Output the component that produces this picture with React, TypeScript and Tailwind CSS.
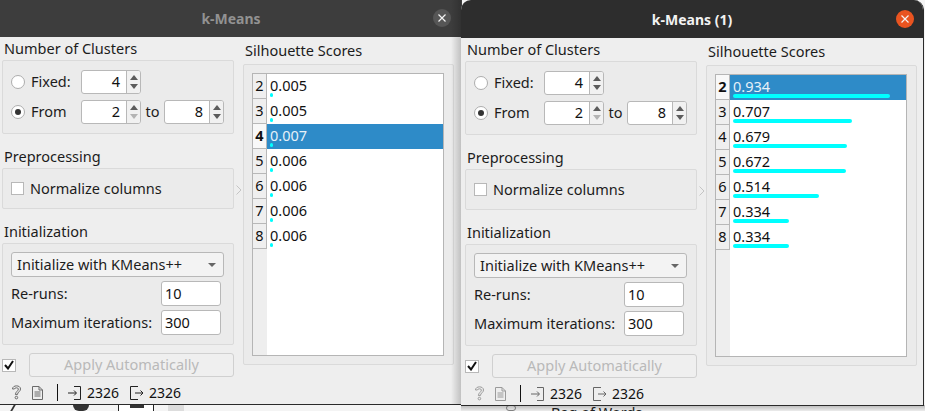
import React from "react";

const font = { fontFamily: '"Noto Sans", "Open Sans", sans-serif' };

function Arrow({ up, dim }: { up?: boolean; dim?: boolean }) {
  return (
    <svg width="8" height="5" viewBox="0 0 8 5" className="block">
      <path d={up ? "M0 5 L4 0 L8 5Z" : "M0 0 L4 5 L8 0Z"} fill={dim ? "#b4b4b4" : "#5c5c5c"} />
    </svg>
  );
}

function Spin({ value, dimDown }: { value: string; dimDown?: boolean }) {
  return (
    <div className="flex h-[24px] w-[60px] shrink-0 overflow-hidden rounded-[3px] border border-[#b8b8b8] bg-white">
      <div className="flex flex-1 items-center justify-end pr-[6px] text-[14.5px] text-[#111]">{value}</div>
      <div className="flex w-[14px] flex-col items-center justify-center gap-[4px] border-l border-[#b8b8b8] bg-[#f1f1f1]">
        <Arrow up />
        <Arrow dim={dimDown} />
      </div>
    </div>
  );
}

function Radio({ on }: { on?: boolean }) {
  return (
    <div className="flex h-[14px] w-[14px] shrink-0 items-center justify-center rounded-full border border-[#adadad] bg-white">
      {on && <div className="h-[6px] w-[6px] rounded-full bg-[#333]" />}
    </div>
  );
}

function Label({ children, h }: { children: React.ReactNode; h: string }) {
  return <div className={`flex items-center pl-[2px] text-[14.5px] text-[#1c1c1c] ${h}`}>{children}</div>;
}

function TextField({ value }: { value: string }) {
  return (
    <div className="flex h-[25px] w-[60px] items-center rounded-[3px] border border-[#b8b8b8] bg-white pl-[3px] text-[14.5px] text-[#111]">
      {value}
    </div>
  );
}

function HelpIcon({ color }: { color: string }) {
  return (
    <svg width="11" height="15" viewBox="0 0 11 15" fill="none" stroke={color} strokeWidth="1">
      <path d="M1.5 4 C1.5 -0.2 9.5 -0.2 9.5 4 C9.5 6.6 6.6 6.8 6.4 9.6 H4.4 C4.6 6.4 7.4 6 7.4 4 C7.4 2.4 3.6 2.4 3.4 4 Z" />
      <circle cx="5.4" cy="12.6" r="1.3" />
    </svg>
  );
}

function DocIcon({ color }: { color: string }) {
  return (
    <svg width="11" height="14" viewBox="0 0 11 14" fill="none" stroke={color} strokeWidth="1">
      <path d="M0.5 0.5 H7 L10.5 4 V13.5 H0.5 Z M7 0.5 V4 H10.5" />
      <path d="M2.5 6 H8.5 M2.5 8 H8.5 M2.5 10 H8.5" />
    </svg>
  );
}

function InIcon({ color }: { color: string }) {
  return (
    <svg width="14" height="14" viewBox="0 0 14 14" fill="none" stroke={color} strokeWidth="1">
      <path d="M6 0.5 H12.5 V13.5 H6" />
      <path d="M0 7 H8 M6 4.5 L8.5 7 L6 9.5" />
    </svg>
  );
}

function OutIcon({ color }: { color: string }) {
  return (
    <svg width="14" height="14" viewBox="0 0 14 14" fill="none" stroke={color} strokeWidth="1">
      <path d="M8 0.5 H0.5 V13.5 H8" />
      <path d="M5 7 H13 M10.5 4.5 L13 7 L10.5 9.5" />
    </svg>
  );
}

type Row = { k: number; v: string };

function Win({
  title,
  rows,
  selected,
  active,
}: {
  title: string;
  rows: Row[];
  selected: number;
  active?: boolean;
}) {
  const iconColor = active ? "#9a9a9a" : "#6a6a6a";
  const ioColor = active ? "#666" : "#222";
  return (
    <div className="flex h-full w-full flex-col bg-[#eeeeee]">
      <div
        className={`relative flex h-[37px] shrink-0 items-center justify-center text-[14px] font-bold ${
          active ? "bg-[#2d2d2d] text-[#f2f2f2]" : "bg-[#3d3d3d] text-[#929292]"
        }`}
      >
        {title}
        <div
          className={`absolute top-[9px] flex h-[18px] w-[18px] items-center justify-center rounded-full ${
            active ? "right-[9px] bg-[#e95420]" : "right-[11px] bg-[#565656]"
          }`}
        >
          <svg width="8" height="8" viewBox="0 0 8 8" stroke="#f4f4f4" strokeWidth="1.2">
            <path d="M0.5 0.5 L7.5 7.5 M7.5 0.5 L0.5 7.5" />
          </svg>
        </div>
      </div>

      <div className={active ? "pl-[2px]" : ""}>
        <div className="flex">
          <div className="ml-[2px] flex w-[232px] shrink-0 flex-col">
            <Label h="h-[23px]">Number of Clusters</Label>
            <div className="flex h-[74px] flex-col gap-[6px] rounded-[2px] border border-[#dadada] bg-[#ebebeb] pl-[8px] pt-[9px]">
              <div className="flex h-[24px] items-center">
                <Radio />
                <span className="ml-[6px] w-[50px] text-[14.5px] text-[#1c1c1c]">Fixed:</span>
                <Spin value="4" />
              </div>
              <div className="flex h-[24px] items-center">
                <Radio on />
                <span className="ml-[6px] w-[50px] text-[14.5px] text-[#1c1c1c]">From</span>
                <Spin value="2" dimDown />
                <span className="w-[23px] text-center text-[14.5px] text-[#1c1c1c]">to</span>
                <Spin value="8" />
              </div>
            </div>

            <Label h="h-[34px] pt-[12px]">Preprocessing</Label>
            <div className="flex h-[41px] items-center rounded-[2px] border border-[#dadada] bg-[#ebebeb] pl-[8px]">
              <div className="h-[13px] w-[13px] border border-[#b8b8b8] bg-white" />
              <span className="ml-[6px] text-[14.5px] text-[#1c1c1c]">Normalize columns</span>
            </div>

            <Label h="h-[34px] pt-[12px]">Initialization</Label>
            <div className="flex h-[102px] flex-col rounded-[2px] border border-[#dadada] bg-[#ebebeb] pl-[8px] pr-[9px] pt-[8px]">
              <div className="flex h-[25px] items-center justify-between rounded-[3px] border border-[#b8b8b8] bg-[#f3f3f3] pl-[5px] pr-[7px] text-[14.5px] text-[#1c1c1c]">
                <span>Initialize with KMeans++</span>
                <svg width="8" height="4" viewBox="0 0 8 4" className="block">
                  <path d="M0 0 L4 4 L8 0Z" fill="#666" />
                </svg>
              </div>
              <div className="mt-[4px] flex h-[25px] items-center justify-between pr-[3px] text-[14.5px] text-[#1c1c1c]">
                <span>Re-runs:</span>
                <TextField value="10" />
              </div>
              <div className="mt-[4px] flex h-[25px] items-center justify-between pr-[3px] text-[14.5px] text-[#1c1c1c]">
                <span>Maximum iterations:</span>
                <TextField value="300" />
              </div>
            </div>
          </div>

          <div className="flex w-[9px] shrink-0 flex-col items-center pt-[148px]">
            <svg width="6" height="10" viewBox="0 0 6 10" fill="none" stroke="#c4c4c4" strokeWidth="1">
              <path d="M0.5 0.5 L5 5 L0.5 9.5" />
            </svg>
          </div>

          <div className="flex w-[211px] shrink-0 flex-col">
            <Label h="h-[27px]">Silhouette Scores</Label>
            <div className="h-[301px] rounded-[2px] border border-[#dadada] bg-[#ebebeb] pb-[8px] pl-[8px] pr-[9px] pt-[8px]">
              <div className="flex h-full border border-[#b5b5b5] bg-white">
                <div className="w-[14px] shrink-0 bg-[#eeeeee]">
                  {rows.map((r) => (
                    <div
                      key={r.k}
                      className={`flex h-[25px] items-center justify-center border-b border-r border-[#b8b8b8] text-[14.5px] text-[#111] ${
                        r.k === selected ? "bg-[#f8f8f8] font-bold" : "bg-[#efefef]"
                      }`}
                    >
                      {r.k}
                    </div>
                  ))}
                </div>
                <div className="flex-1">
                  {rows.map((r) => {
                    const sel = r.k === selected;
                    return (
                      <div key={r.k} className={`relative h-[25px] pl-[3px] text-[14.5px] leading-[23px] ${sel ? "bg-[#2e8bc8] text-[#e6f1f8]" : "text-[#111]"}`}>
                        {r.v}
                        <div
                          className="absolute left-[3px] top-[19px] h-[4px] rounded-full bg-[#00ffff]"
                          style={{ width: Math.max(3, parseFloat(r.v) * 168) }}
                        />
                      </div>
                    );
                  })}
                </div>
              </div>
            </div>
          </div>
        </div>

        <div className="ml-[2px] mt-[-12px] flex h-[24px] w-[232px] items-center gap-[13px]">
          <div className="flex h-[13px] w-[14px] items-center justify-center border border-[#b8b8b8] bg-white">
            <svg width="10" height="10" viewBox="0 0 10 10" fill="none" stroke="#111" strokeWidth="2">
              <path d="M1 5 L4 8.5 L9 1" />
            </svg>
          </div>
          <div className="flex h-[24px] flex-1 items-center justify-center rounded-[3px] border border-[#d0d0d0] bg-[#efefef] text-[14.5px] text-[#b9b9b9]">
            Apply Automatically
          </div>
        </div>

        <div className="ml-[11px] mt-[7px] flex h-[17px] items-center text-[14px] text-[#111]">
          <HelpIcon color={iconColor} />
          <div className="ml-[10px]">
            <DocIcon color={iconColor} />
          </div>
          <div className="ml-[14px] h-[17px] w-px bg-[#111]" />
          <div className="ml-[10px]">
            <InIcon color={ioColor} />
          </div>
          <span className="ml-[5px]">2326</span>
          <div className="ml-[11px]">
            <OutIcon color={ioColor} />
          </div>
          <span className="ml-[5px]">2326</span>
        </div>
      </div>
    </div>
  );
}

const leftRows: Row[] = [
  { k: 2, v: "0.005" },
  { k: 3, v: "0.005" },
  { k: 4, v: "0.007" },
  { k: 5, v: "0.006" },
  { k: 6, v: "0.006" },
  { k: 7, v: "0.006" },
  { k: 8, v: "0.006" },
];
const rightRows: Row[] = [
  { k: 2, v: "0.934" },
  { k: 3, v: "0.707" },
  { k: 4, v: "0.679" },
  { k: 5, v: "0.672" },
  { k: 6, v: "0.514" },
  { k: 7, v: "0.334" },
  { k: 8, v: "0.334" },
];

export default function App() {
  return (
    <div className="relative h-[411px] w-[925px] overflow-hidden bg-[#f4f4f4]" style={font}>
      {/* desktop canvas peeking out below the windows */}
      <div className="absolute left-[12px] top-[405px] h-[6px] w-[7px] border-l-2 border-[#333] [transform:skewX(-30deg)]" />
      <div className="absolute left-[73px] top-[405px] h-[6px] w-[16px] rounded-b-full bg-[#333]" />
      <div className="absolute left-[118px] top-[405px] h-[6px] w-[36px] border-x border-[#222] bg-white" />
      <div className="absolute left-[130px] top-[405px] h-[3px] w-[14px] bg-[#333]" />
      <div className="absolute left-[168px] top-[405px] h-[6px] w-[16px] bg-[#dddddd]" />
      <div className="absolute left-[506px] top-[405px] h-[6px] w-[10px] rounded-full border border-[#888]" />
      <div className="absolute left-[551px] top-[403px] text-[14.5px] leading-[18px] text-[#222]">Bag of Words</div>
      <div className="absolute left-[461px] top-[405px] h-[6px] w-[464px] bg-gradient-to-b from-[#00000040] to-[#00000008]" />

      <div className="absolute left-0 top-0 h-[405px] w-[462px] border-b border-[#2a2a2a]">
        <Win title="k-Means" rows={leftRows} selected={4} />
      </div>
      <div className="absolute left-[451px] top-0 h-[405px] w-[10px] bg-gradient-to-r from-[#00000000] to-[#00000030]" />
      <div className="absolute left-[461px] top-0 h-[406px] w-[463px] overflow-hidden rounded-t-[10px] border-b border-r border-[#2a2a2a] pt-px [background:#2d2d2d]">
        <Win title="k-Means (1)" rows={rightRows} selected={2} active />
      </div>
    </div>
  );
}
